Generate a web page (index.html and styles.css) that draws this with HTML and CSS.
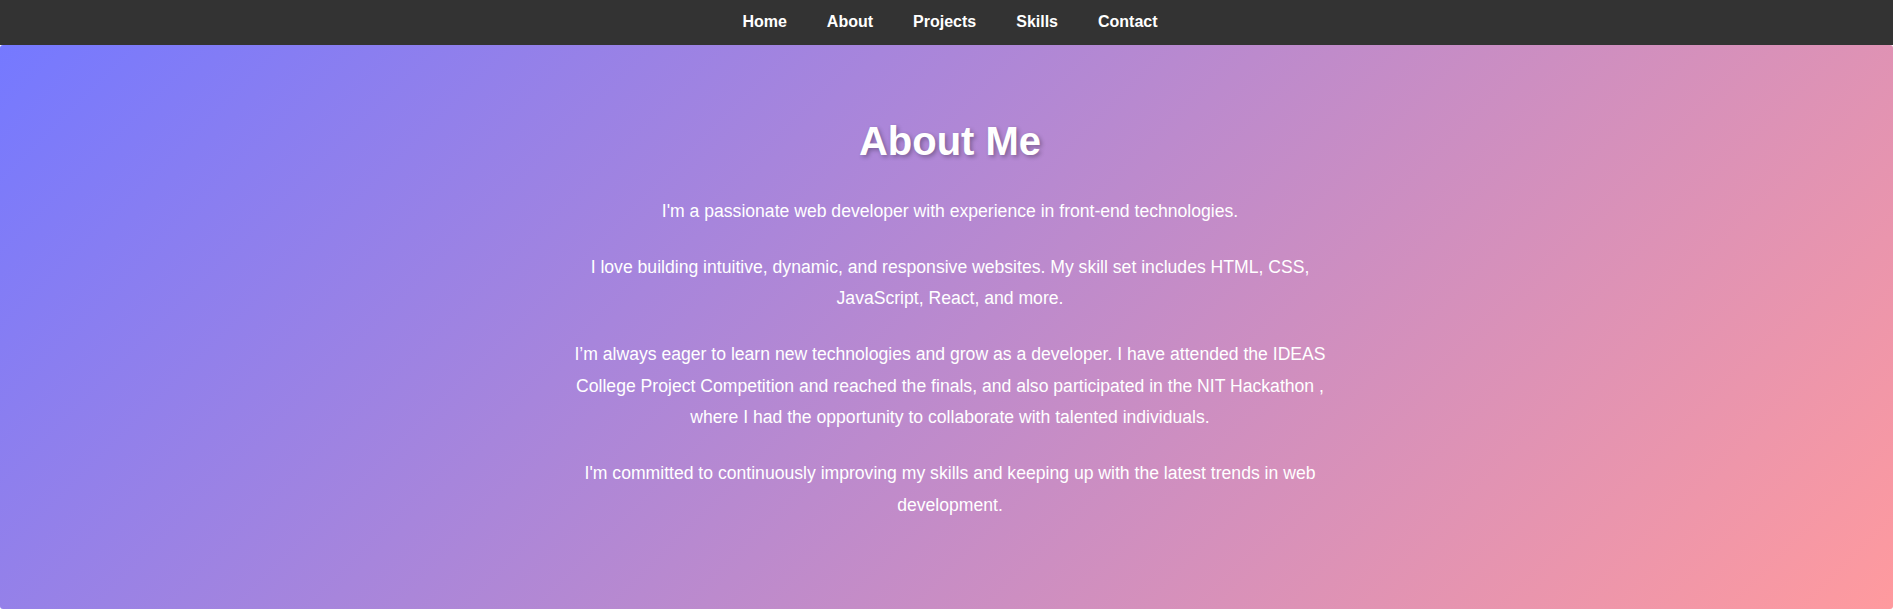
FILE: index.html
```html
<!DOCTYPE html>
<html lang="en">
<head>
<meta charset="UTF-8">
<title>About Me</title>
<link rel="stylesheet" href="styles.css">
</head>
<body>
<nav class="navbar">
  <ul class="nav-links">
    <li><a href="#home">Home</a></li>
    <li><a href="#about">About</a></li>
    <li><a href="#projects">Projects</a></li>
    <li><a href="#skills">Skills</a></li>
    <li><a href="#contact">Contact</a></li>
  </ul>
</nav>
<section class="about" id="about">
  <div class="about-inner">
    <h2 class="about-title">About Me</h2>
    <p>I'm a passionate web developer with experience in front-end technologies.</p>
    <p>I love building intuitive, dynamic, and responsive websites. My skill set includes HTML, CSS, JavaScript, React, and more.</p>
    <p>I’m always eager to learn new technologies and grow as a developer. I have attended the IDEAS College Project Competition and reached the finals, and also participated in the NIT Hackathon , where I had the opportunity to collaborate with talented individuals.</p>
    <p>I'm committed to continuously improving my skills and keeping up with the latest trends in web development.</p>
  </div>
</section>
</body>
</html>
```

FILE: styles.css
```css
* {
  box-sizing: border-box;
}

html, body {
  margin: 0;
  padding: 0;
  background: #ffffff;
  font-family: "Liberation Sans", Arial, sans-serif;
}

.navbar {
  background: #333333;
  height: 45px;
  padding: 0 0 2px 7px;
  display: flex;
  align-items: center;
  justify-content: center;
}

.nav-links {
  list-style: none;
  margin: 0;
  padding: 0;
  display: flex;
  gap: 40px;
}

.nav-links a {
  color: #ffffff;
  text-decoration: none;
  font-weight: bold;
  font-size: 16px;
}

.about {
  background: linear-gradient(135deg, #7579ff 0%, #ff9a9e 100%);
  color: #ffffff;
  padding: 40px 20px 64px 27px;
  border-radius: 3px;
  text-align: center;
}

.about-inner {
  max-width: 800px;
  margin: 0 auto;
}

.about-title {
  font-size: 40px;
  margin: 34px 0 32px;
  text-shadow: 2px 2px 4px rgba(0, 0, 0, 0.3);
}

.about p {
  font-size: 17.6px;
  line-height: 1.8;
  margin: 24px 0;
}
```
